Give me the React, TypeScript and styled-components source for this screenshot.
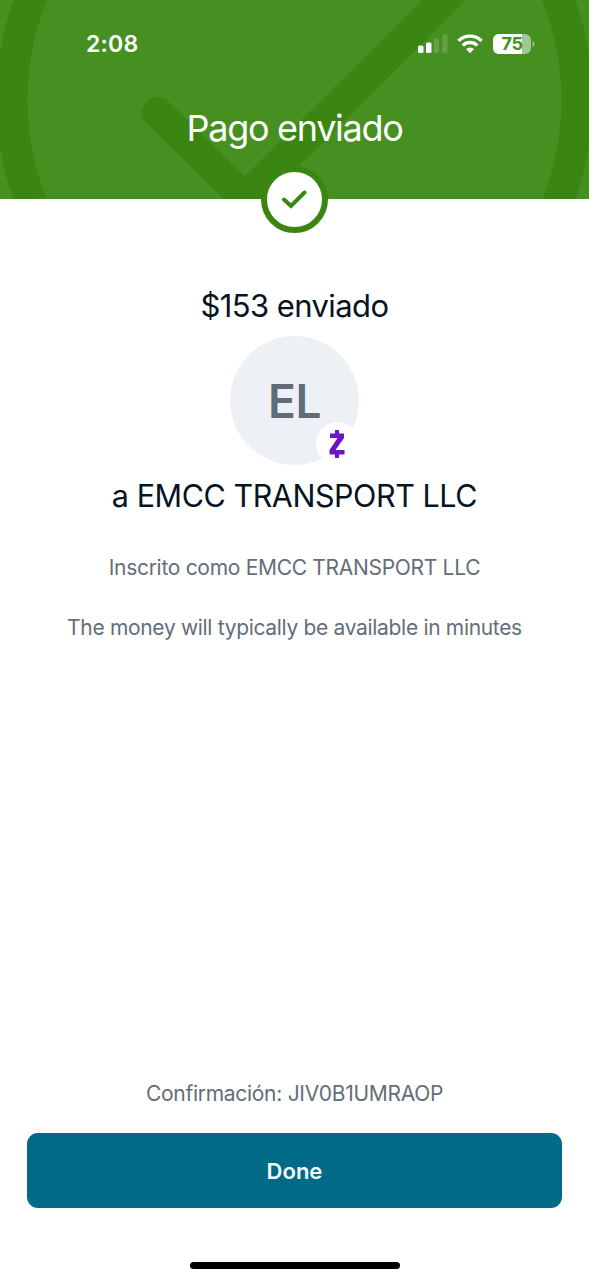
import styled, { createGlobalStyle } from 'styled-components';

const GlobalStyle = createGlobalStyle`
  * {
    box-sizing: border-box;
  }

  body {
    margin: 0;
    background: #ffffff;
    font-family: Inter, 'Liberation Sans', sans-serif;
  }
`;

const Screen = styled.div`
  width: 589px;
  height: 1280px;
  display: flex;
  flex-direction: column;
  align-items: center;
  overflow: hidden;
  background: #ffffff;
`;

const Header = styled.header`
  position: relative;
  width: 100%;
  height: 199px;
  flex: none;
  display: flex;
  flex-direction: column;
  align-items: center;
  background: #469022;
`;

const Watermark = styled.svg`
  position: absolute;
  inset: 0;
`;

const StatusBar = styled.div`
  position: relative;
  width: 100%;
  height: 87px;
  padding: 0 54px 0 86px;
  display: flex;
  align-items: center;
  justify-content: space-between;
`;

const StatusIcons = styled.div`
  display: flex;
  align-items: center;
`;

const Text = styled.p<{ $size: number; $spacing?: number; $color?: string; $weight?: number; $top?: number }>`
  position: relative;
  margin: ${({ $top = 0 }) => $top}px 0 0;
  font-size: ${({ $size }) => $size}px;
  line-height: 40px;
  font-weight: ${({ $weight = 400 }) => $weight};
  letter-spacing: ${({ $spacing = 0 }) => $spacing}px;
  color: ${({ $color = '#06141f' }) => $color};
  white-space: nowrap;
`;

const CheckBadge = styled.div`
  position: absolute;
  left: 261px;
  top: 166px;
  width: 67px;
  height: 67px;
  border: 6px solid #3b8612;
  border-radius: 50%;
  background: #ffffff;
  display: flex;
  align-items: center;
  justify-content: center;
`;

const Details = styled.main`
  flex: 1;
  display: flex;
  flex-direction: column;
  align-items: center;
  padding-top: 87px;
`;

const Avatar = styled.div`
  position: relative;
  width: 129px;
  height: 129px;
  margin-top: 10px;
  border-radius: 50%;
  background: #edf1f6;
  display: flex;
  align-items: center;
  justify-content: center;
`;

const ZelleBadge = styled.div`
  position: absolute;
  left: 86px;
  top: 86px;
  width: 43px;
  height: 43px;
  border-radius: 50%;
  background: #ffffff;
  display: flex;
  align-items: center;
  justify-content: center;
`;

const Footer = styled.footer`
  width: 100%;
  padding: 0 27px 11px;
  display: flex;
  flex-direction: column;
  align-items: center;
`;

const DoneButton = styled.button`
  width: 100%;
  height: 75px;
  margin-top: 19px;
  padding: 0;
  border: 0;
  border-radius: 11px;
  background: #006a87;
  color: #f2fcff;
  font-family: inherit;
  font-size: 22px;
  font-weight: 600;
`;

const HomeIndicator = styled.div`
  width: 210px;
  height: 7px;
  margin-top: 54px;
  border-radius: 4px;
  background: #000000;
`;

const Signal = () => (
  <svg width="30" height="20" viewBox="0 0 30 20" fill="#fff">
    <rect x="0" y="11.5" width="5.5" height="7.5" rx="1.5" />
    <rect x="8" y="8.5" width="5.5" height="10.5" rx="1.5" />
    <rect x="16" y="4.5" width="5" height="14.5" rx="1.5" opacity="0.16" />
    <rect x="24.500" y="0.5" width="5" height="18.5" rx="1.5" opacity="0.16" />
  </svg>
);

const Wifi = () => (
  <svg width="26" height="20" viewBox="0 0 26 20" fill="none" stroke="#fff" strokeWidth="3.4" style={{ marginLeft: 9 }}>
    <path d="M1.4 6.900a16.6 16.6 0 0 1 23.2 0" />
    <path d="M5.7 11.500a10.5 10.5 0 0 1 14.6 0" />
    <path d="M13 19.3l-4-4.300a5.8 5.8 0 0 1 8 0z" fill="#fff" stroke="none" />
  </svg>
);

const Battery = () => (
  <svg width="42" height="20" viewBox="0 0 42 20" style={{ marginLeft: 10 }}>
    <defs>
      <clipPath id="battery">
        <rect width="38" height="20" rx="6" />
      </clipPath>
    </defs>
    <g clipPath="url(#battery)">
      <rect width="38" height="20" fill="#a2c791" />
      <rect width="29" height="20" fill="#fff" />
    </g>
    <path d="M39.5 7v6q2-.8 2-3t-2-3z" fill="#a2c791" />
    <text x="19" y="16.4" textAnchor="middle" fontSize="18" fontWeight="700" letterSpacing="-0.3" fill="#469022">
      75
    </text>
  </svg>
);

export const App = (): JSX.Element => {
  return (
    <Screen>
      <GlobalStyle />
      <Header>
        <Watermark width="589" height="199" fill="none" stroke="#3b8612" strokeWidth="31">
          <circle cx="294.5" cy="100" r="282.5" />
          <path d="M157.500 112.500L245 198L460 -16" strokeLinecap="round" />
        </Watermark>
        <StatusBar>
          <Text as="span" $size={23} $weight={600} $spacing={0.2} $color="#ffffff">
            2:08
          </Text>
          <StatusIcons>
            <Signal />
            <Wifi />
            <Battery />
          </StatusIcons>
        </StatusBar>
        <Text $size={36} $spacing={-1.3} $color="#ffffff" $top={21}>
          Pago enviado
        </Text>
        <CheckBadge>
          <svg width="26" height="20" viewBox="0 0 26 20" fill="none" stroke="#3b8612" strokeWidth="4" strokeLinecap="round">
            <path d="M2 9.500L9 16L22.500 2.500" />
          </svg>
        </CheckBadge>
      </Header>

      <Details>
        <Text $size={31} $spacing={-0.6}>
          $153 enviado
        </Text>
        <Avatar>
          <Text as="span" $size={46} $weight={600} $spacing={-0.5} $color="#5f6d79">
            EL
          </Text>
          <ZelleBadge>
            <svg width="16" height="30" viewBox="0 0 16 30" fill="#6a16c4">
              <path d="M6 1h4v3.500h5v4.500L6.500 21H15.500V25.500h-5.500v3.500H6v-3.500H.5v-4.500L8.500 9H1V4.500h5z" />
            </svg>
          </ZelleBadge>
        </Avatar>
        <Text $size={30.5} $spacing={-0.45} $top={11}>
          a EMCC TRANSPORT LLC
        </Text>
        <Text $size={21} $spacing={-0.3} $top={32} $color="#636e78">
          Inscrito como EMCC TRANSPORT LLC
        </Text>
        <Text $size={21} $spacing={-0.32} $top={20} $color="#636e78">
          The money will typically be available in minutes
        </Text>
      </Details>

      <Footer>
        <Text $size={21} $spacing={-0.28} $color="#636e78">
          Confirmación: JIV0B1UMRAOP
        </Text>
        <DoneButton>Done</DoneButton>
        <HomeIndicator />
      </Footer>
    </Screen>
  );
};

export default App;
